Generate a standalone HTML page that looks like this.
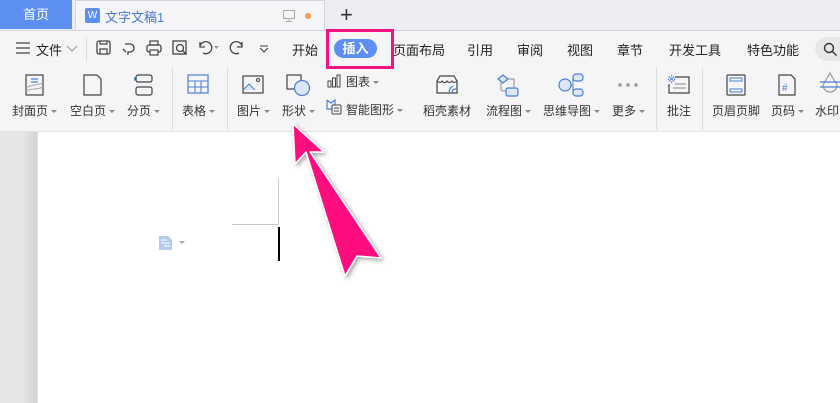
<!DOCTYPE html>
<html><head><meta charset="utf-8"><style>
*{margin:0;padding:0;box-sizing:border-box}
body{width:840px;height:403px;overflow:hidden;position:relative;background:#fff;font-family:"Liberation Sans","Noto Sans CJK SC",sans-serif;color:#333}
.a{position:absolute;white-space:nowrap}
.t{font-size:12px;color:#333}
.m{font-size:13px;color:#222}
.c{display:inline-block;width:0;height:0;border-left:3px solid transparent;border-right:3px solid transparent;border-top:3px solid #888;vertical-align:middle;margin-left:3px}
.sep{position:absolute;width:1px;background:#ddd}
svg{position:absolute;overflow:visible}
</style></head><body>
<!-- tab bar -->
<div class="a" style="left:0;top:0;width:840px;height:30px;background:#eceef3"></div>
<div class="a" style="left:0;top:0;width:72px;height:29px;background:#5d8ff3;color:#fff;font-size:13px;line-height:29px;text-align:center">首页</div>
<div class="a" style="left:75px;top:0;width:250px;height:31px;background:#f5f5f7;border:1px solid #d3d6de;border-bottom:none"></div>
<div class="a" style="left:85px;top:8px;width:15px;height:15px;background:#5d8ff3;border-radius:2px;color:#fff;font-size:10px;line-height:15px;text-align:center">W</div>
<div class="a" style="left:105px;top:7px;font-size:13px;color:#4a79d8">文字文稿1</div>
<svg style="left:283px;top:10px" width="12" height="12"><rect x="0.5" y="0.5" width="11" height="8" fill="none" stroke="#aaa"/><path d="M6 9v2M3 11.5h6" stroke="#aaa"/></svg>
<div class="a" style="left:305px;top:13px;width:6px;height:6px;border-radius:3px;background:#f0a050"></div>
<div class="a" style="left:340px;top:2px;font-size:22px;color:#333;font-weight:300">+</div>
<!-- toolbar -->
<div class="a" style="left:0;top:30px;width:840px;height:102px;background:#f5f5f7;border-top:1px solid #d3d6de;border-bottom:1px solid #e4e4e6"></div>
<svg style="left:16px;top:42px" width="14" height="12"><path d="M0 1h14M0 6h14M0 11h14" stroke="#444" stroke-width="1.3"/></svg>
<div class="a m" style="left:36px;top:40px">文件</div>
<svg style="left:67px;top:46px" width="10" height="6"><path d="M0 0l5 5 5-5" fill="none" stroke="#999"/></svg>
<div class="sep" style="left:86px;top:37px;height:24px"></div>
<svg style="left:96px;top:40px" width="16" height="16"><rect x="1" y="1" width="13" height="13" rx="2" fill="none" stroke="#444" stroke-width="1.3"/><path d="M4 14V9h7v5M4 1v3h7V1" fill="none" stroke="#444" stroke-width="1.2"/></svg>
<svg style="left:122px;top:40px" width="16" height="16"><path d="M3 4h5a4 4 0 0 1 0 8H6v3M1 9l3 3" fill="none" stroke="#444" stroke-width="1.3"/></svg>
<svg style="left:146px;top:40px" width="16" height="16"><rect x="1" y="5" width="14" height="7" rx="2" fill="none" stroke="#444" stroke-width="1.3"/><rect x="4" y="1" width="8" height="4" fill="none" stroke="#444" stroke-width="1.2"/><rect x="4" y="10" width="8" height="5" fill="#f5f5f7" stroke="#444" stroke-width="1.2"/></svg>
<svg style="left:172px;top:40px" width="16" height="16"><rect x="1" y="1" width="13" height="13" fill="none" stroke="#444" stroke-width="1.3"/><circle cx="8" cy="8" r="3.5" fill="#f5f5f7" stroke="#444" stroke-width="1.3"/><path d="M10.5 10.5l4 4" stroke="#444" stroke-width="1.3"/></svg>
<svg style="left:198px;top:41px" width="22" height="14"><path d="M2 5a6 6 0 1 1 3 7M2 1v5h5" fill="none" stroke="#444" stroke-width="1.3"/><path d="M17 6l2.5 3 2.5-3z" fill="#999" transform="translate(-1,-1)"/></svg>
<svg style="left:230px;top:41px" width="14" height="14"><path d="M12 5a6 6 0 1 0-3 7M12 1v5H7" fill="none" stroke="#444" stroke-width="1.3"/></svg>
<svg style="left:259px;top:45px" width="10" height="8"><path d="M1 1h8M1 3l4 4 4-4" fill="none" stroke="#444" stroke-width="1.1"/></svg>
<div class="a m" style="left:292px;top:40px">开始</div>
<div class="a" style="left:334px;top:39px;width:43px;height:19px;border-radius:10px;background:#5d8ff3;color:#fff;font-size:13px;line-height:19px;text-align:center;font-weight:bold">插入</div>
<div class="a" style="left:326px;top:29px;width:68px;height:40px;border:3px solid #f0157e"></div>
<div class="a m" style="left:393px;top:40px">页面布局</div>
<div class="a m" style="left:467px;top:40px">引用</div>
<div class="a m" style="left:517px;top:40px">审阅</div>
<div class="a m" style="left:567px;top:40px">视图</div>
<div class="a m" style="left:617px;top:40px">章节</div>
<div class="a m" style="left:669px;top:40px">开发工具</div>
<div class="a m" style="left:747px;top:40px">特色功能</div>
<div class="a" style="left:815px;top:37px;width:40px;height:24px;border-radius:12px;background:#e8e8ea"></div>
<svg style="left:823px;top:42px" width="14" height="14"><circle cx="6" cy="6" r="4.5" fill="none" stroke="#333" stroke-width="1.4"/><path d="M9.5 9.5l4 4" stroke="#333" stroke-width="1.4"/></svg>
<!-- separators -->
<div class="sep" style="left:172px;top:68px;height:62px"></div>
<div class="sep" style="left:227px;top:68px;height:62px"></div>
<div class="sep" style="left:656px;top:68px;height:62px"></div>
<div class="sep" style="left:702px;top:68px;height:62px"></div>
<!-- icons row -->
<svg style="left:25px;top:74px" width="20" height="22"><rect x="1" y="1" width="17" height="20" fill="none" stroke="#444" stroke-width="1.2"/><path d="M6 5h7M6 8h7" stroke="#4a7ed8" stroke-width="1.2"/><path d="M1 14c5-4 10-2 17-5M1 17c6-3 11-1 17-4" fill="none" stroke="#aaa"/></svg>
<svg style="left:83px;top:74px" width="20" height="22"><path d="M1 1h13l4 4v16H1z" fill="none" stroke="#444" stroke-width="1.2"/></svg>
<svg style="left:132px;top:74px" width="22" height="22"><path d="M2 3l3 2-3 2z" fill="#4a7ed8"/><rect x="4" y="1" width="16" height="7" rx="2" fill="none" stroke="#444" stroke-width="1.2"/><rect x="4" y="13" width="16" height="8" rx="2" fill="none" stroke="#444" stroke-width="1.2"/></svg>
<svg style="left:187px;top:74px" width="22" height="20"><rect x="1" y="1" width="20" height="18" fill="none" stroke="#4a7ed8" stroke-width="1.2"/><path d="M1 7h20M1 13h20M8 7v12M14 7v12" stroke="#4a7ed8"/></svg>
<svg style="left:242px;top:75px" width="22" height="20"><rect x="1" y="1" width="20" height="17" fill="none" stroke="#444" stroke-width="1.2"/><path d="M1 15l6-6 6 6" fill="#dce6f6" stroke="#4a7ed8"/><circle cx="16" cy="5" r="1.5" fill="none" stroke="#444"/></svg>
<svg style="left:286px;top:74px" width="26" height="24"><rect x="1" y="1" width="14" height="14" fill="none" stroke="#444" stroke-width="1.2"/><circle cx="16" cy="14" r="7.5" fill="#dce6f6" stroke="#4a7ed8" stroke-width="1.2"/></svg>
<svg style="left:327px;top:74px" width="14" height="14"><rect x="1" y="7" width="3" height="6" fill="none" stroke="#444"/><rect x="5.5" y="4" width="3" height="9" fill="none" stroke="#444"/><rect x="10" y="1" width="3" height="12" fill="none" stroke="#444"/></svg>
<div class="a t" style="left:346px;top:73px">图表<span class="c"></span></div>
<svg style="left:326px;top:99px" width="16" height="16"><path d="M1 1v9h5M1 1l4 3 4-3v5" fill="none" stroke="#4a7ed8" stroke-width="1.2"/><rect x="6" y="6" width="9" height="9" rx="1" fill="#f5f5f7" stroke="#444"/><path d="M8 9h5M8 12h5" stroke="#444"/></svg>
<div class="a t" style="left:346px;top:101px">智能图形<span class="c"></span></div>
<svg style="left:436px;top:75px" width="22" height="20"><path d="M1 6l3-5h14l3 5v12H1z" fill="none" stroke="#444" stroke-width="1.2"/><path d="M1 6c2 2 4 2 5 0 1 2 4 2 5 0 1 2 4 2 5 0 1 2 3 2 5 0" fill="none" stroke="#444"/><path d="M13 18c0-4 2-6 4-7M16 18c0-3 2-4 4-4" fill="none" stroke="#4a7ed8" stroke-width="1.2"/></svg>
<svg style="left:496px;top:73px" width="24" height="24"><path d="M2 6l5-4 5 4-5 4z" fill="#dce6f6" stroke="#4a7ed8" stroke-width="1.2"/><rect x="10" y="15" width="12" height="8" rx="2" fill="#dce6f6" stroke="#4a7ed8" stroke-width="1.2"/><path d="M5 9v7a2 2 0 0 0 2 2h3M12 6h6v8" fill="none" stroke="#888"/></svg>
<svg style="left:558px;top:73px" width="26" height="24"><circle cx="7" cy="12" r="6" fill="#dce6f6" stroke="#4a7ed8" stroke-width="1.2"/><rect x="15" y="1" width="10" height="7" rx="3" fill="#dce6f6" stroke="#4a7ed8" stroke-width="1.2"/><rect x="15" y="16" width="10" height="7" rx="3" fill="#dce6f6" stroke="#4a7ed8" stroke-width="1.2"/><path d="M13 12h2v-7M15 12v7" fill="none" stroke="#4a7ed8"/></svg>
<svg style="left:618px;top:83px" width="20" height="4"><circle cx="2" cy="2" r="1.8" fill="#999"/><circle cx="10" cy="2" r="1.8" fill="#999"/><circle cx="18" cy="2" r="1.8" fill="#999"/></svg>
<svg style="left:667px;top:74px" width="24" height="22"><text x="0" y="9" font-size="11" fill="#4a7ed8" font-family="Liberation Sans">※</text><path d="M8 3h14v16H2V10" fill="none" stroke="#444" stroke-width="1.2"/><path d="M8 10h11M6 14h13" stroke="#888"/></svg>
<svg style="left:726px;top:74px" width="20" height="22"><rect x="1" y="1" width="18" height="20" rx="1" fill="none" stroke="#444" stroke-width="1.2"/><rect x="4" y="4" width="12" height="3" fill="none" stroke="#4a7ed8"/><rect x="4" y="15" width="12" height="3" fill="none" stroke="#4a7ed8"/></svg>
<svg style="left:778px;top:74px" width="18" height="22"><path d="M1 1h12l4 4v16H1z" fill="none" stroke="#444" stroke-width="1.2"/><text x="4" y="17" font-size="10" fill="#4a7ed8" font-family="Liberation Sans">#</text></svg>
<svg style="left:820px;top:72px" width="22" height="24"><path d="M10 1l-7 12a7 7 0 0 0 14 0z" fill="none" stroke="#999" stroke-width="1.2"/><path d="M0 10h22M0 15h22" stroke="#4a7ed8" stroke-width="1.2"/></svg>
<!-- labels -->
<div class="a t" style="left:12px;top:102px">封面页<span class="c"></span></div>
<div class="a t" style="left:70px;top:102px">空白页<span class="c"></span></div>
<div class="a t" style="left:127px;top:102px">分页<span class="c"></span></div>
<div class="a t" style="left:182px;top:102px">表格<span class="c"></span></div>
<div class="a t" style="left:237px;top:102px">图片<span class="c"></span></div>
<div class="a t" style="left:282px;top:102px">形状<span class="c"></span></div>
<div class="a t" style="left:423px;top:102px">稻壳素材</div>
<div class="a t" style="left:486px;top:102px">流程图<span class="c"></span></div>
<div class="a t" style="left:543px;top:102px">思维导图<span class="c"></span></div>
<div class="a t" style="left:612px;top:102px">更多<span class="c"></span></div>
<div class="a t" style="left:667px;top:102px">批注</div>
<div class="a t" style="left:712px;top:102px">页眉页脚</div>
<div class="a t" style="left:771px;top:102px">页码<span class="c"></span></div>
<div class="a t" style="left:815px;top:102px">水印</div>
<!-- document area -->
<div class="a" style="left:0;top:132px;width:38px;height:271px;background:linear-gradient(to right,#e6e6e6 0,#e6e6e6 22px,#d4d4d4 37px,#ececec 38px)"></div>
<div class="a" style="left:278px;top:178px;width:1px;height:46px;background:#c8c8c8"></div>
<div class="a" style="left:232px;top:224px;width:47px;height:1px;background:#c8c8c8"></div>
<div class="a" style="left:278px;top:227px;width:2px;height:34px;background:#000"></div>
<svg style="left:159px;top:236px" width="14" height="14"><path d="M0 0h9l4 4v10H0z" fill="#b5c9ea"/><path d="M2 4h6M2 7h9M5 10h6" stroke="#fff"/></svg>
<svg style="left:179px;top:241px" width="6" height="4"><path d="M0 0h6l-3 3z" fill="#aaa"/></svg>
<!-- arrow -->
<svg style="left:0;top:0" width="840" height="403"><defs><filter id="s" x="-20%" y="-20%" width="140%" height="140%"><feDropShadow dx="2" dy="2" stdDeviation="2" flood-color="#000" flood-opacity="0.35"/></filter></defs>
<polygon points="293,124 324,152 310,152 381,258 357,256 345,276 306,152 295,164" fill="#ff087e" stroke="#fff" stroke-width="1.5" stroke-linejoin="round" filter="url(#s)"/></svg>
</body></html>
